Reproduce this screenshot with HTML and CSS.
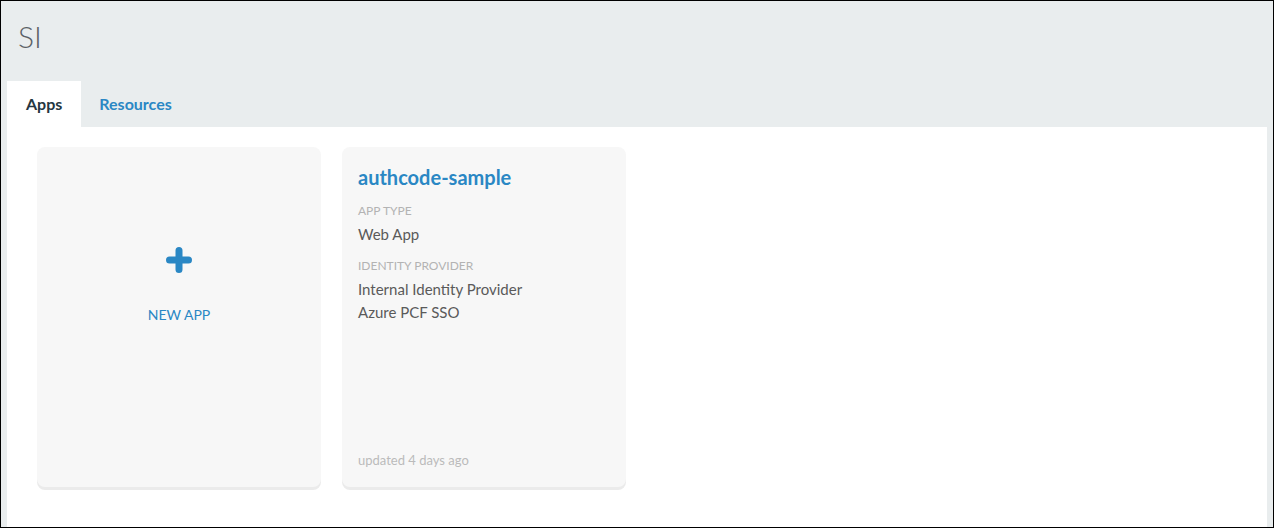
FILE: index.html
```html
<!DOCTYPE html>
<html>
<head>
<meta charset="utf-8">
<link rel="stylesheet" href="styles.css">
</head>
<body>
<div class="frame">
  <header class="header">
    <h1 class="org">SI</h1>
  </header>
  <nav class="tabs">
    <div class="tab active">Apps</div>
    <div class="tab">Resources</div>
  </nav>
  <main class="panel">
    <div class="card new-card">
      <svg class="plus" width="26" height="26" viewBox="0 0 26 26">
        <path d="M13 3.5V22.5M3.5 13H22.5" stroke="#2a87c4" stroke-width="7" stroke-linecap="round" fill="none"/>
      </svg>
      <div class="new-label">NEW APP</div>
    </div>
    <div class="card app-card">
      <div class="app-title">authcode-sample</div>
      <div class="field-label">APP TYPE</div>
      <div class="field-value">Web App</div>
      <div class="field-label">IDENTITY PROVIDER</div>
      <div class="field-value">Internal Identity Provider</div>
      <div class="field-value">Azure PCF SSO</div>
      <div class="updated">updated 4 days ago</div>
    </div>
  </main>
</div>
</body>
</html>
```
FILE: styles.css
```css
html, body {
  margin: 0;
  padding: 0;
}
body {
  font-family: "Lato", "Open Sans", sans-serif;
}
.frame {
  width: 1274px;
  height: 528px;
  box-sizing: border-box;
  border: 1px solid #000;
  background: #e9edee;
  display: flex;
  flex-direction: column;
}
.header {
  height: 80px;
  padding-left: 17px;
  box-sizing: border-box;
}
.org {
  margin: 0;
  padding-top: 17px;
  font-size: 30px;
  font-weight: 300;
  color: #5b6166;
  line-height: 36px;
}
.tabs {
  display: flex;
  padding-left: 6px;
  height: 46px;
}
.tab {
  padding: 0 18px;
  font-size: 16px;
  font-weight: 700;
  line-height: 45px;
  color: #2a87c4;
}
.tab.active {
  background: #fff;
  color: #243641;
  padding: 0 19px;
}
.panel {
  flex: 1;
  background: #fff;
  margin: 0 6px;
  padding: 20px 30px;
  display: flex;
  gap: 21px;
  align-items: flex-start;
}
.card {
  width: 284px;
  height: 340px;
  box-sizing: border-box;
  background: #f7f7f7;
  border-radius: 8px;
  box-shadow: 0 3px 0 #ebebeb;
}
.new-card {
  display: flex;
  flex-direction: column;
  align-items: center;
  padding-top: 100px;
}
.plus {
  display: block;
}
.new-label {
  margin-top: 33px;
  font-size: 14px;
  color: #2a87c4;
}
.app-card {
  display: flex;
  flex-direction: column;
  padding: 17px 16px 18px;
}
.app-title {
  font-size: 20px;
  font-weight: 700;
  color: #2a87c4;
  line-height: 26px;
  margin-bottom: 11px;
}
.field-label {
  font-size: 12px;
  color: #b3b3b3;
  line-height: 20px;
  margin-bottom: 2px;
}
.field-value {
  font-size: 15px;
  color: #5a5a5a;
  line-height: 23px;
}
.field-value + .field-label {
  margin-top: 10px;
}
.updated {
  margin-top: auto;
  font-size: 13px;
  color: #bbb;
  line-height: 18px;
}
```
